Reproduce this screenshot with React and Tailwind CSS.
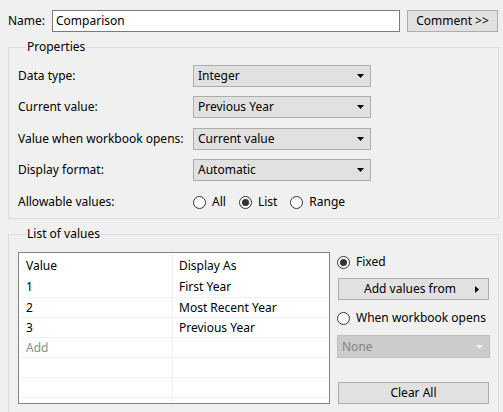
import React from 'react';

const font = "font-['Segoe_UI','Noto_Sans','Open_Sans',sans-serif]";

const Caret = ({ color = '#000' }) => (
  <svg width="7" height="4" viewBox="0 0 7 4" className="shrink-0">
    <path d="M0 0h7L3.5 4z" fill={color} />
  </svg>
);

const Combo = ({ value }) => (
  <div className="w-[178px] h-[22px] flex items-center justify-between pl-[4px] pr-[6px] bg-[#e1e1e1] border border-[#adadad] text-black">
    <span>{value}</span>
    <Caret />
  </div>
);

const Radio = ({ checked, label }) => (
  <label className="flex items-center gap-[6px]">
    <span className="w-[13px] h-[13px] rounded-full border border-[#333333] bg-white flex items-center justify-center">
      {checked && <span className="w-[7px] h-[7px] rounded-full bg-[#333333]" />}
    </span>
    <span>{label}</span>
  </label>
);

const Row = ({ label, children, className = '' }) => (
  <div className={`flex items-center ${className}`}>
    <div className="w-[175px]">{label}</div>
    {children}
  </div>
);

const listRows = [
  { value: '1', display: 'First Year' },
  { value: '2', display: 'Most Recent Year' },
  { value: '3', display: 'Previous Year' },
];

export default function App() {
  return (
    <div className={`w-[503px] h-[412px] overflow-hidden bg-[#f0f0f0] text-[12px] leading-[16px] text-black ${font}`}>
      {/* Name bar */}
      <div className="flex items-center pt-[10px] pl-[8px] pr-[5px]">
        <span className="w-[44px]">Name:</span>
        <div className="w-[348px] h-[22px] flex items-center px-[3px] bg-white border border-[#7a7a7a]">Comparison</div>
        <button className="ml-[7px] w-[91px] h-[22px] bg-[#e1e1e1] border border-[#adadad]">Comment &gt;&gt;</button>
      </div>

      {/* Properties */}
      <fieldset className="mt-[7px] mx-[8px] w-[491px] border border-[#dcdcdc] pl-[9px] pb-[8px]">
        <legend className="ml-[8px] px-[1px]">Properties</legend>
        <Row label="Data type:" className="mt-[10px]">
          <Combo value="Integer" />
        </Row>
        <Row label="Current value:" className="mt-[9px]">
          <Combo value="Previous Year" />
        </Row>
        <Row label="Value when workbook opens:" className="mt-[10px]">
          <Combo value="Current value" />
        </Row>
        <Row label="Display format:" className="mt-[9px]">
          <Combo value="Automatic" />
        </Row>
        <Row label="Allowable values:" className="mt-[13px]">
          <div className="flex items-center gap-[13px]">
            <Radio label="All" />
            <Radio label="List" checked />
            <Radio label="Range" />
          </div>
        </Row>
      </fieldset>

      {/* List of values */}
      <fieldset className="mt-[7px] mx-[8px] w-[491px] h-[200px] border border-[#dcdcdc] pl-[9px]">
        <legend className="ml-[8px] px-[1px]">List of values</legend>
        <div className="flex mt-[10px]">
          <div className="w-[312px] h-[152px] bg-white border border-[#828282] overflow-hidden">
            <div className="flex h-[24px] items-center">
              <div className="w-[154px] h-full pl-[7px] pt-[5px] border-r border-[#f0f0f0]">Value</div>
              <div className="flex-1 h-full pl-[6px] pt-[5px]">Display As</div>
            </div>
            {listRows.concat([{ value: 'Add', display: '', muted: true }, {}, {}, {}]).map((r, i) => (
              <div key={i} className={`flex h-[20px] ${i > 0 ? 'border-t border-[#f0f0f0]' : ''}`}>
                <div className={`w-[154px] pl-[7px] pt-[2px] border-r border-[#f0f0f0] ${r.muted ? 'text-[#8c8c8c]' : ''}`}>{r.value}</div>
                <div className="flex-1 pl-[6px] pt-[2px]">{r.display}</div>
              </div>
            ))}
          </div>

          <div className="ml-[7px] w-[153px] flex flex-col">
            <div className="mt-[2px]">
              <Radio label="Fixed" checked />
            </div>
            <button className="mt-[8px] ml-[1px] w-[151px] h-[22px] flex items-center bg-[#e1e1e1] border border-[#adadad]">
              <span className="flex-1 text-center pl-[6px]">Add values from</span>
              <svg width="4" height="7" viewBox="0 0 4 7" className="mr-[9px]">
                <path d="M0 0v7l4-3.5z" fill="#000" />
              </svg>
            </button>
            <div className="mt-[10px]">
              <Radio label="When workbook opens" />
            </div>
            <div className="mt-[9px] w-[153px] h-[23px] flex items-center justify-between pl-[4px] pr-[6px] bg-[#cccccc] border border-[#bfbfbf] text-[#838383]">
              <span>None</span>
              <Caret color="#f0f0f0" />
            </div>
            <button className="mt-[24px] ml-[1px] w-[151px] h-[22px] bg-[#e1e1e1] border border-[#adadad]">Clear All</button>
          </div>
        </div>
      </fieldset>
    </div>
  );
}
